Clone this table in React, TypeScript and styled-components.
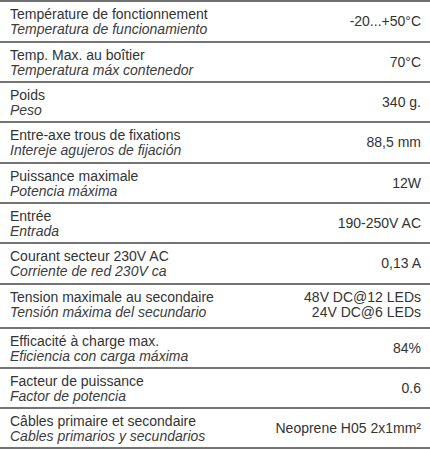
import React from "react";
import styled, { createGlobalStyle } from "styled-components";

type Spec = {
  fr: string;
  es: string;
  value: string[];
  height: number;
};

const specs: Spec[] = [
  { fr: "Température de fonctionnement", es: "Temperatura de funcionamiento", value: ["-20...+50°C"], height: 41 },
  { fr: "Temp. Max. au boîtier", es: "Temperatura máx contenedor", value: ["70°C"], height: 40 },
  { fr: "Poids", es: "Peso", value: ["340 g."], height: 40 },
  { fr: "Entre-axe trous de fixations", es: "Intereje agujeros de fijación", value: ["88,5 mm"], height: 41 },
  { fr: "Puissance maximale", es: "Potencia máxima", value: ["12W"], height: 40 },
  { fr: "Entrée", es: "Entrada", value: ["190-250V AC"], height: 40 },
  { fr: "Courant secteur 230V AC", es: "Corriente de red 230V ca", value: ["0,13 A"], height: 41 },
  {
    fr: "Tension maximale au secondaire",
    es: "Tensión máxima del secundario",
    value: ["48V DC@12 LEDs", "24V DC@6 LEDs"],
    height: 44,
  },
  { fr: "Efficacité à charge max.", es: "Eficiencia con carga máxima", value: ["84%"], height: 40 },
  { fr: "Facteur de puissance", es: "Factor de potencia", value: ["0.6"], height: 40 },
  { fr: "Câbles primaire et secondaire", es: "Cables primarios y secundarios", value: ["Neoprene H05 2x1mm²"], height: 40 },
];

const GlobalStyle = createGlobalStyle`
  body {
    margin: 0;
    background: #ffffff;
    font-family: "Liberation Sans", Arial, sans-serif;
  }
`;

const Table = styled.div`
  width: 430px;
  border-top: 2px solid #707070;
  color: #363636;
`;

const Row = styled.div<{ $h: number }>`
  box-sizing: border-box;
  height: ${(p) => p.$h}px;
  border-bottom: 2px solid #747474;
  padding: 5px 9px 0 10px;
  display: flex;
  justify-content: space-between;
  align-items: flex-start;
  font-size: 14px;
  line-height: 15px;
`;

const Label = styled.div`
  display: flex;
  flex-direction: column;
`;

const Main = styled.span`
  color: #333333;
`;

const Sub = styled.span`
  font-style: italic;
  color: #3c3c3c;
`;

const Value = styled.div<{ $multi: boolean }>`
  text-align: right;
  align-self: ${(p) => (p.$multi ? "flex-start" : "center")};
  margin-top: ${(p) => (p.$multi ? "0" : "-5px")};
  color: #333333;
  display: flex;
  flex-direction: column;
`;

export default function App() {
  return (
    <>
      <GlobalStyle />
      <Table>
        {specs.map((s) => (
          <Row key={s.fr} $h={s.height}>
            <Label>
              <Main>{s.fr}</Main>
              <Sub>{s.es}</Sub>
            </Label>
            <Value $multi={s.value.length > 1}>
              {s.value.map((v) => (
                <span key={v}>{v}</span>
              ))}
            </Value>
          </Row>
        ))}
      </Table>
    </>
  );
}
